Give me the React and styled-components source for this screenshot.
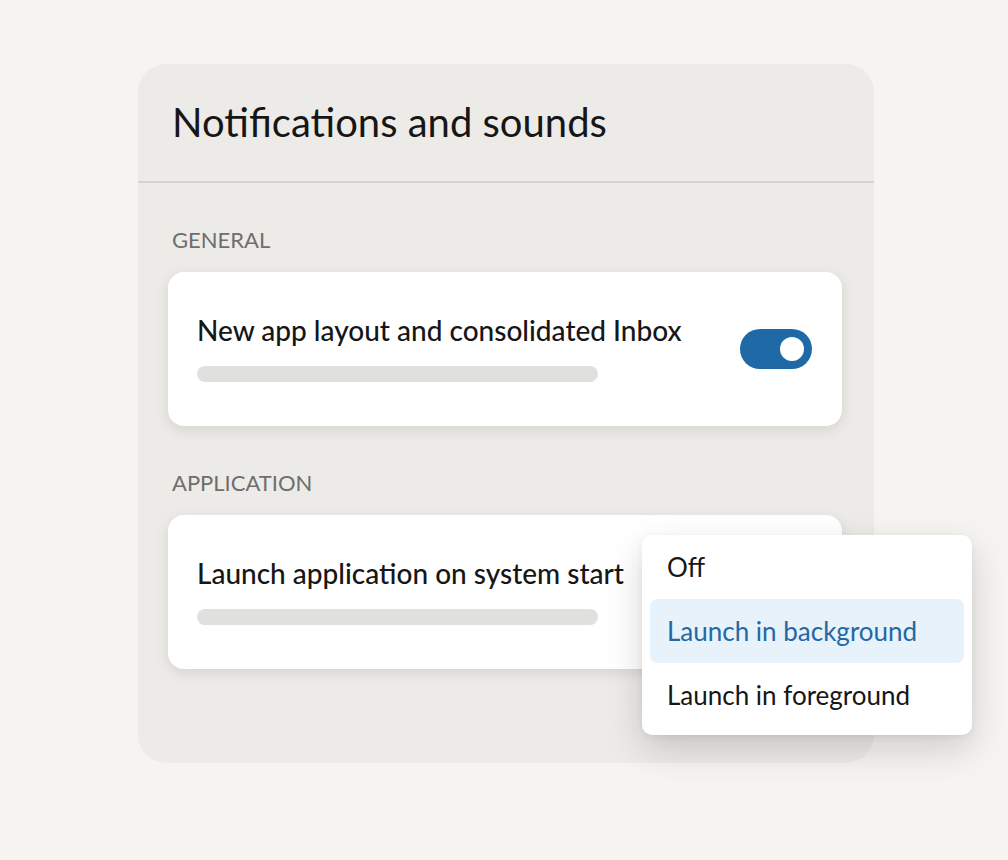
import React from 'react';
import styled, { createGlobalStyle } from 'styled-components';

const sections = [
  {
    id: 'general',
    label: 'General',
    title: 'New app layout and consolidated Inbox',
    control: 'toggle'
  },
  {
    id: 'application',
    label: 'Application',
    title: 'Launch application on system start',
    control: 'menu'
  }
];

const launchOptions = ['Off', 'Launch in background', 'Launch in foreground'];

const GlobalStyle = createGlobalStyle`
  html, body {
    margin: 0;
    background: #f5f4f1;
  }
  body {
    font-family: Lato, "Noto Sans", sans-serif;
    color: #1a1a1a;
  }
`;

const App = () => {
  const selected = 'Launch in background';

  return (
    <>
      <GlobalStyle />
      <Page>
        <Panel>
          <Header>
            <Title>Notifications and sounds</Title>
          </Header>
          <Body>
            {sections.map(section => (
              <Section key={section.id}>
                <SectionLabel>{section.label}</SectionLabel>
                <Card>
                  <CardText>
                    <CardTitle>{section.title}</CardTitle>
                    <Placeholder />
                  </CardText>
                  {section.control === 'toggle' && (
                    <Toggle on>
                      <Knob />
                    </Toggle>
                  )}
                  {section.control === 'menu' && (
                    <Menu>
                      {launchOptions.map(option => (
                        <MenuItem key={option} active={option === selected}>
                          {option}
                        </MenuItem>
                      ))}
                    </Menu>
                  )}
                </Card>
              </Section>
            ))}
          </Body>
        </Panel>
      </Page>
    </>
  );
};

const Page = styled.div`
  min-height: 860px;
  padding: 64px 0 0 138px;
  box-sizing: border-box;
`;

const Panel = styled.div`
  width: 736px;
  background-color: #edebe7;
  border-radius: 28px;
  padding-bottom: 94px;
`;

const Header = styled.div`
  padding: 34px 34px 35px;
  border-bottom: 2px solid #d6d4d0;
`;

const Title = styled.h1`
  margin: 0;
  font-size: 40px;
  line-height: 1.2;
  font-weight: 400;
  color: #161616;
`;

const Body = styled.div`
  padding: 0 32px 0 30px;
`;

const Section = styled.section`
  margin-top: 45px;
`;

const SectionLabel = styled.div`
  padding-left: 4px;
  margin-bottom: 20px;
  font-size: 22px;
  line-height: 24px;
  text-transform: uppercase;
  color: #6e6e6c;
`;

const Card = styled.div`
  position: relative;
  display: flex;
  align-items: center;
  justify-content: space-between;
  padding: 44px 30px 44px 29px;
  background-color: #ffffff;
  border-radius: 16px;
  box-shadow: 0 4px 14px rgba(0, 0, 0, 0.1);
`;

const CardText = styled.div`
  display: flex;
  flex-direction: column;
`;

const CardTitle = styled.div`
  font-size: 28px;
  line-height: 29px;
  font-weight: 500;
  color: #161616;
`;

const Placeholder = styled.div`
  width: 401px;
  height: 16px;
  margin-top: 21px;
  border-radius: 8px;
  background-color: #e0e0df;
`;

const Toggle = styled.div`
  display: flex;
  align-items: center;
  justify-content: ${props => props.on ? 'flex-end' : 'flex-start'};
  width: 72px;
  height: 40px;
  padding: 0 8px;
  box-sizing: border-box;
  border-radius: 20px;
  background-color: ${props => props.on ? '#1f6aa6' : '#c8c8c6'};
`;

const Knob = styled.div`
  width: 24px;
  height: 24px;
  border-radius: 50%;
  background-color: #ffffff;
`;

const Menu = styled.div`
  position: absolute;
  top: 20px;
  left: 474px;
  width: 330px;
  padding: 0 8px 8px;
  box-sizing: border-box;
  background-color: #ffffff;
  border-radius: 10px;
  box-shadow: 0 14px 36px rgba(0, 0, 0, 0.16), 0 2px 6px rgba(0, 0, 0, 0.06);
`;

const MenuItem = styled.div`
  display: flex;
  align-items: center;
  height: 64px;
  padding-left: 17px;
  border-radius: 8px;
  font-size: 26px;
  color: ${props => props.active ? '#2368a3' : '#161616'};
  background-color: ${props => props.active ? '#e7f2fb' : 'transparent'};
`;

export default App;
